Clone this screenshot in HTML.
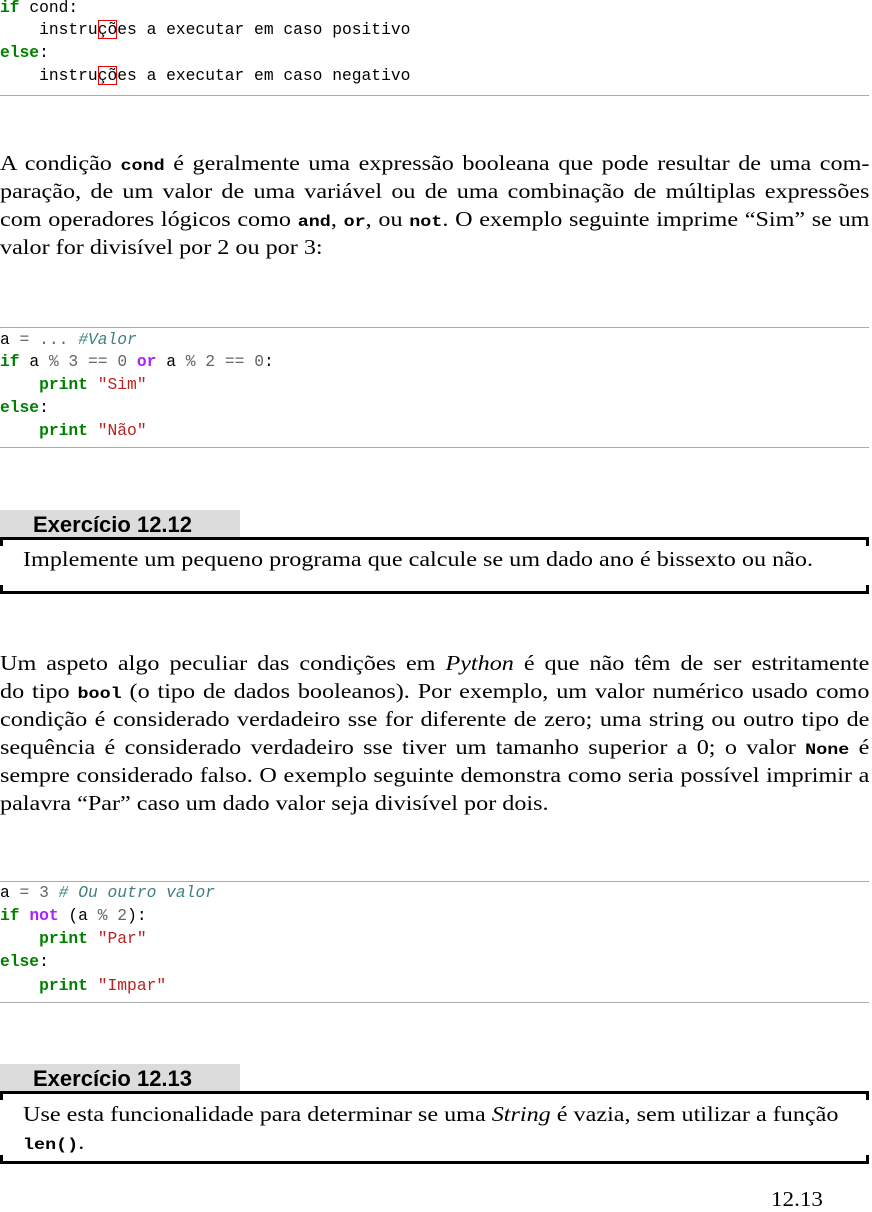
<!DOCTYPE html>
<html><head><meta charset="utf-8"><style>
body{margin:0;width:872px;height:1209px;background:#fff;position:relative;overflow:hidden;color:#000}
.c{position:absolute;left:0;font-family:"Liberation Mono",monospace;font-size:16.3px;line-height:22px;height:22px;white-space:pre}
.l{position:absolute;left:0;width:756px;height:28px;line-height:28px;font-family:"Liberation Serif",serif;font-size:21px;text-align:justify;text-align-last:justify;white-space:nowrap;transform:scaleX(1.15);transform-origin:0 0;word-spacing:-1px}
.l.e{text-align-last:left;word-spacing:0}
.l code,.t code{font-family:"Liberation Mono",monospace;font-weight:bold;font-size:16px}
.k{color:#008000;font-weight:bold}
.o{color:#aa22ff;font-weight:bold}
.g{color:#666}
.s{color:#ba2121}
.cm{color:#408080;font-style:italic}
.rule{position:absolute;left:0;width:869px;height:1px;background:#aaa}
.hb{position:absolute;left:0;width:240px;height:27px;background:#dcdcdc;font-family:"Liberation Sans",sans-serif;font-weight:bold;font-size:22px;line-height:30px;padding-left:33px;box-sizing:border-box}
.bx{position:absolute;left:0;width:869px;border:3px solid #000;box-sizing:border-box}
.bx .m2{position:absolute;left:-3px;right:-3px;top:6px;bottom:6px;background:#fff}
.t{position:absolute;left:23px;font-family:"Liberation Serif",serif;font-size:21px;line-height:28px;white-space:nowrap;transform:scaleX(1.15);transform-origin:0 0}
.red{box-shadow:inset 0 0 0 1px #e00}
</style></head><body>
<div class="c" style="top:-3px"><span class="k">if</span> cond:</div>
<div class="c" style="top:19px">    instru<span class="red">çõ</span>es a executar em caso positivo</div>
<div class="c" style="top:42px"><span class="k">else</span>:</div>
<div class="c" style="top:65px">    instru<span class="red">çõ</span>es a executar em caso negativo</div>
<div class="rule" style="top:95px"></div>

<div class="l" style="top:149px">A condição <code>cond</code> é geralmente uma expressão booleana que pode resultar de uma com-</div>
<div class="l" style="top:177px">paração, de um valor de uma variável ou de uma combinação de múltiplas expressões</div>
<div class="l" style="top:205px">com operadores lógicos como <code>and</code>, <code>or</code>, ou <code>not</code>. O exemplo seguinte imprime “Sim” se um</div>
<div class="l e" style="top:233px">valor for divisível por 2 ou por 3:</div>

<div class="rule" style="top:327px"></div>
<div class="c" style="top:329px">a <span class="g">=</span> <span class="g">...</span> <span class="cm">#Valor</span></div>
<div class="c" style="top:351px"><span class="k">if</span> a <span class="g">%</span> <span class="g">3</span> <span class="g">==</span> <span class="g">0</span> <span class="o">or</span> a <span class="g">%</span> <span class="g">2</span> <span class="g">==</span> <span class="g">0</span>:</div>
<div class="c" style="top:374px">    <span class="k">print</span> <span class="s">"Sim"</span></div>
<div class="c" style="top:397px"><span class="k">else</span>:</div>
<div class="c" style="top:420px">    <span class="k">print</span> <span class="s">"Não"</span></div>
<div class="rule" style="top:447px"></div>

<div class="hb" style="top:510px">Exercício 12.12</div>
<div class="bx" style="top:537px;height:57px"><div class="m2"></div></div>
<div class="t" style="top:545px">Implemente um pequeno programa que calcule se um dado ano é bissexto ou não.</div>

<div class="l" style="top:649px">Um aspeto algo peculiar das condições em <i>Python</i> é que não têm de ser estritamente</div>
<div class="l" style="top:677px">do tipo <code>bool</code> (o tipo de dados booleanos). Por exemplo, um valor numérico usado como</div>
<div class="l" style="top:705px">condição é considerado verdadeiro sse for diferente de zero; uma string ou outro tipo de</div>
<div class="l" style="top:733px">sequência é considerado verdadeiro sse tiver um tamanho superior a 0; o valor <code>None</code> é</div>
<div class="l" style="top:761px">sempre considerado falso. O exemplo seguinte demonstra como seria possível imprimir a</div>
<div class="l e" style="top:789px">palavra “Par” caso um dado valor seja divisível por dois.</div>

<div class="rule" style="top:881px"></div>
<div class="c" style="top:882px">a <span class="g">=</span> <span class="g">3</span> <span class="cm"># Ou outro valor</span></div>
<div class="c" style="top:905px"><span class="k">if</span> <span class="o">not</span> (a <span class="g">%</span> <span class="g">2</span>):</div>
<div class="c" style="top:928px">    <span class="k">print</span> <span class="s">"Par"</span></div>
<div class="c" style="top:951px"><span class="k">else</span>:</div>
<div class="c" style="top:975px">    <span class="k">print</span> <span class="s">"Impar"</span></div>
<div class="rule" style="top:1002px"></div>

<div class="hb" style="top:1064px">Exercício 12.13</div>
<div class="bx" style="top:1091px;height:73px"><div class="m2"></div></div>
<div class="t" style="top:1100px">Use esta funcionalidade para determinar se uma <i>String</i> é vazia, sem utilizar a função</div>
<div class="t" style="top:1128px"><code>len()</code>.</div>

<div style="position:absolute;left:771px;top:1186px;font-family:'Liberation Serif',serif;font-size:21px;line-height:26px;transform:scaleX(1.1);transform-origin:0 0">12.13</div>
</body></html>
